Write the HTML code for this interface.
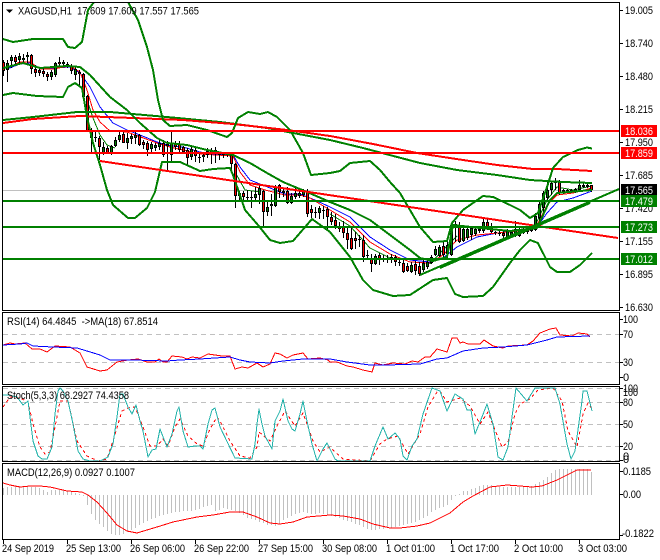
<!DOCTYPE html>
<html><head><meta charset="utf-8"><style>
html,body{margin:0;padding:0;background:#fff;width:660px;height:560px;overflow:hidden}
svg{display:block}
text{font-family:"Liberation Sans",sans-serif;font-size:11px;fill:#000}
.l{fill:none;stroke-linejoin:round;shape-rendering:crispEdges}
</style></head><body>
<svg width="660" height="560" viewBox="0 0 660 560" xmlns="http://www.w3.org/2000/svg">
<defs><clipPath id="m"><rect x="3" y="3" width="616" height="307"/></clipPath></defs>
<rect width="660" height="560" fill="#fff"/>

<g clip-path="url(#m)">
<path class="l" stroke="#c0c0c0" d="M3 190.5H619"/>
<!-- short MAs -->
<path class="l" stroke="#0000ff" d="M7 69L20 64 30 63 40 68 53 68 70 67 80 73 90 87 100 107 113 123 127 130 140 135 157 142 167 145 183 147 200 152 213 154 233 155 240 167 250 180 265 186 285 194 300 194 315 200 330 207 350 217 370 237 390 250 410 260 430 262 443 258 457 247 477 237 497 233 530 229 537 227 547 213 557 202 573 198 592 191"/>
<path class="l" stroke="#ff0000" d="M7 68L20 62 30 62 40 69 53 69 70 66 80 72 87 90 93 110 100 122 110 131 127 132 157 143 170 147 200 154 233 156 240 172 250 185 265 190 285 195 300 195 310 198 330 210 350 222 370 242 390 254 410 262 430 263 443 255 457 240 477 235 497 233 530 230 537 225 547 205 557 195 573 193 592 188"/>
<path class="l" stroke="#008000" d="M87 100L93 118 100 135 107 145 115 148M235 172L245 190 260 192M330 214L350 226 370 248 390 258M430 264L443 250 457 236M535 226L547 200 557 187 573 190 592 186"/>
<!-- wicks -->
<path class="l" stroke="#000" d="M3.5 60V76M7.5 60V82M11.5 55V68M15.5 55V65M19.5 53V65M23.5 54V64M27.5 52V63M31.5 54V74M35.5 65V77M39.5 68V76M43.5 68V77M47.5 72V81M51.5 70V80M55.5 62V77M59.5 57V67M63.5 60V66M67.5 62V68M71.5 64V74M75.5 67V80M79.5 70V85M83.5 73V98M87.5 95V132M91.5 128V152M95.5 132V142M99.5 136V160M103.5 142V155M107.5 146V154M111.5 145V155M115.5 137V147M119.5 132V142M123.5 131V143M127.5 133V149M131.5 134V144M135.5 132V144M139.5 134V146M143.5 140V149M147.5 141V156M151.5 142V152M155.5 143V151M159.5 140V150M163.5 140V157M167.5 141V170M171.5 131V161M175.5 141V150M179.5 141V152M183.5 146V153M187.5 148V165M191.5 146V160M195.5 148V162M199.5 154V163M203.5 152V162M207.5 148V158M211.5 148V164M215.5 147V163M219.5 152V160M223.5 152V158M227.5 152V157M231.5 153V172M235.5 163V208M239.5 191V201M243.5 191V201M247.5 190V202M251.5 191V208M255.5 187V202M259.5 185V204M263.5 190V226M267.5 202V216M271.5 194V216M275.5 185V207M279.5 184V198M283.5 188V197M287.5 187V204M291.5 193V204M295.5 187V199M299.5 191V198M303.5 189V197M307.5 189V217M311.5 205V218M315.5 207V218M319.5 206V219M323.5 206V219M327.5 207V229M331.5 212V225M335.5 214V229M339.5 222V232M343.5 221V238M347.5 226V249M351.5 227V250M355.5 232V249M359.5 235V247M363.5 235V262M367.5 250V260M371.5 254V272M375.5 254V265M379.5 253V265M383.5 255V262M387.5 255V263M391.5 254V263M395.5 255V266M399.5 259V266M403.5 260V273M407.5 263V272M411.5 262V273M415.5 261V275M419.5 262V276M423.5 260V272M427.5 259V269M431.5 255V264M435.5 246V256M439.5 245V257M443.5 242V258M447.5 238V258M451.5 223V256M455.5 221V242M459.5 222V243M463.5 228V242M467.5 227V240M471.5 226V240M475.5 228V236M479.5 227V233M483.5 219V233M487.5 219V230M491.5 223V233M495.5 231V235M499.5 231V236M503.5 231V238M507.5 229V239M511.5 230V237M515.5 221V237M519.5 226V237M523.5 228V234M527.5 226V234M531.5 224V232M535.5 213V231M539.5 202V225M543.5 191V216M547.5 180V200M551.5 181V195M555.5 178V190M559.5 180V195M563.5 189V194M567.5 189V193M571.5 189V193M575.5 188V193M579.5 180V192M583.5 183V188M587.5 183V188M591.5 185V192"/>
<!-- bodies outline -->
<path class="l" stroke="#000" stroke-width="3" d="M3.5 62V71M7.5 63V70M11.5 57V61M15.5 57V62M19.5 56V60M23.5 58V60M27.5 55V57M31.5 55V69M35.5 69V73M39.5 70V73M43.5 71V74M47.5 74V77M51.5 72V77M55.5 63V75M59.5 62V64M63.5 62V64M67.5 64V66M71.5 66V71M75.5 69V75M79.5 72V74M83.5 74V97M87.5 96V131M91.5 130V138M95.5 137V138M99.5 138V147M103.5 147V153M107.5 148V153M111.5 146V153M115.5 140V146M119.5 135V140M123.5 134V143M127.5 138V143M131.5 136V139M135.5 135V138M139.5 135V145M143.5 142V145M147.5 143V150M151.5 144V149M155.5 145V148M159.5 143V147M163.5 143V155M167.5 144V146M171.5 143V155M175.5 143V147M179.5 144V150M183.5 147V152M187.5 150V158M191.5 149V157M195.5 150V156M199.5 157V158M203.5 155V157M207.5 151V155M211.5 151V154M215.5 150V152M219.5 154V155M223.5 154V155M227.5 154V155M231.5 155V164M235.5 164V196M239.5 193V196M243.5 193V197M247.5 197V198M251.5 197V198M255.5 194V198M259.5 188V195M263.5 191V212M267.5 207V212M271.5 204V206M275.5 187V206M279.5 185V192M283.5 191V193M287.5 191V203M291.5 196V203M295.5 193V197M299.5 193V196M303.5 191V195M307.5 191V214M311.5 209V213M315.5 212V213M319.5 208V213M323.5 210V211M327.5 209V217M331.5 217V222M335.5 220V226M339.5 227V229M343.5 227V233M347.5 233V240M351.5 238V249M355.5 238V241M359.5 239V240M363.5 240V257M367.5 255V256M371.5 259V264M375.5 256V264M379.5 255V260M383.5 259V260M387.5 258V260M391.5 257V260M395.5 257V262M399.5 262V263M403.5 263V272M407.5 266V271M411.5 265V272M415.5 264V271M419.5 266V274M423.5 263V270M427.5 262V267M431.5 257V263M435.5 249V255M439.5 247V256M443.5 246V255M447.5 245V254M451.5 225V255M455.5 224V228M459.5 226V242M463.5 229V241M467.5 229V238M471.5 228V235M475.5 229V234M479.5 229V231M483.5 222V231M487.5 222V227M491.5 226V232M495.5 232V233M499.5 233V234M503.5 233V236M507.5 231V237M511.5 232V236M515.5 229V236M519.5 229V236M523.5 232V233M527.5 229V232M531.5 226V231M535.5 216V230M539.5 204V218M543.5 193V208M547.5 190V198M551.5 183V190M555.5 181V183M559.5 182V193M563.5 190V192M567.5 190V192M571.5 190V192M575.5 189V191M579.5 185V190M583.5 185V187M587.5 185V187M591.5 185V190"/>
<!-- red bodies -->
<path class="l" stroke="#ff0000" d="M3.5 63V70M15.5 58V61M31.5 56V68M35.5 70V72M39.5 71V72M43.5 72V73M47.5 75V76M59.5 63V63.5M67.5 65V65.5M71.5 67V70M79.5 73V73.5M83.5 75V96M87.5 97V130M91.5 131V137M99.5 139V146M107.5 149V152M123.5 135V142M139.5 136V144M143.5 143V144M147.5 144V149M163.5 144V154M175.5 144V146M179.5 145V149M183.5 148V151M187.5 151V157M195.5 151V155M215.5 151V151.5M231.5 156V163M235.5 165V195M243.5 194V196M263.5 192V211M279.5 186V191M287.5 192V202M307.5 192V213M311.5 210V212M327.5 210V216M331.5 218V221M335.5 221V225M339.5 228V228.5M343.5 228V232M347.5 234V239M351.5 239V248M355.5 239V240M363.5 241V256M371.5 260V263M379.5 256V259M395.5 258V261M403.5 264V271M407.5 267V270M415.5 265V270M419.5 267V273M443.5 247V254M455.5 225V227M459.5 227V241M487.5 223V226M491.5 227V231M503.5 234V235M559.5 183V192M591.5 186V189"/>
<!-- green bodies -->
<path class="l" stroke="#008000" d="M7.5 64V69M11.5 58V60M19.5 57V59M23.5 59V59.5M27.5 56V56.5M51.5 73V76M55.5 64V74M63.5 63V63.5M75.5 70V74M103.5 148V152M111.5 147V152M115.5 141V145M119.5 136V139M127.5 139V142M131.5 137V138M135.5 136V137M151.5 145V148M155.5 146V147M159.5 144V146M167.5 145V145.5M171.5 144V154M191.5 150V156M203.5 156V156.5M207.5 152V154M211.5 152V153M239.5 194V195M255.5 195V197M259.5 189V194M267.5 208V211M271.5 205V205.5M275.5 188V205M291.5 197V202M295.5 194V196M299.5 194V195M303.5 192V194M319.5 209V212M375.5 257V263M391.5 258V259M411.5 266V271M423.5 264V269M427.5 263V266M431.5 258V262M435.5 250V254M439.5 248V255M447.5 246V253M451.5 226V254M463.5 230V240M467.5 230V237M471.5 229V234M475.5 230V233M483.5 223V230M507.5 232V236M511.5 233V235M515.5 230V235M519.5 230V235M527.5 230V231M531.5 227V230M535.5 217V229M539.5 205V217M543.5 194V207M547.5 191V197M551.5 184V189M555.5 182V182.5M575.5 190V190.5M579.5 186V189"/>

<!-- long MAs -->
<path class="l" stroke="#008000" stroke-width="2" d="M3 120L33 117 77 112 110 112 167 117 220 122 267 128 330 140 363 148 420 163 457 170 497 175 530 180 563 182 592 183"/>
<path class="l" stroke="#ff0000" stroke-width="2" d="M3 123L33 119 80 116 133 118 183 120 233 124 287 130 330 136 373 144 417 153 463 160 497 165 533 169 557 169 592 171"/>
<!-- bands -->
<path class="l" stroke="#008000" stroke-width="2" d="M3 39L13 42 33 39 63 39 68 47 75 48 82 42 88 10 94 2 102 -30 120 -30 128 2 138 20 147 47 153 70 158 100 163 120 170 126 187 125 207 130 227 137 232 133 238 118 248 112 260 114 268 112 277 117 290 130 303 153 311 175 330 173 340 171 350 163 370 161 380 170 390 182 400 193 410 210 420 227 433 242 447 241 452 223 463 210 483 196 493 197 510 205 520 210 530 218 538 213 547 187 553 168 563 157 578 150 587 147.5 592 148.5"/>
<path class="l" stroke="#008000" stroke-width="2" d="M3 68L23 63 40 68 67 66 80 67 90 75 110 97 127 110 140 123 157 138 167 143 187 145 207 150 233 155 250 163 267 173 283 182 307 192 330 202 350 210 370 220 390 235 410 250 420 258 433 261 447 257 453 225 480 228 510 231 537 228 550 200 557 193 592 190"/>
<path class="l" stroke="#008000" stroke-width="2" d="M3 95L13 93 37 96 63 97 68 87 75 83 82 88 87 117 93 143 100 165 107 190 113 205 128 218 135 218 147 208 155 192 162 162 180 162 200 171 213 169 230 168 233 175 245 210 258 225 270 240 280 243 293 241 312 219 330 232 350 257 363 280 373 290 393 296 410 295 433 280 447 278 455 294 463 297 483 296 493 287 510 263 520 250 530 240 538 243 550 267 557 272 570 272 580 265 592 253"/>
<!-- trends and levels -->
<path class="l" stroke="#ff0000" stroke-width="2" d="M100 161L618 238"/>
<path class="l" stroke="#008000" stroke-width="2" d="M420 275L619 189"/>
<path class="l" stroke="#008000" stroke-width="2" d="M440 268L530 229M537 226L590 203"/>
<path class="l" stroke="#ff0000" stroke-width="2" d="M3 131H619M3 153H619"/>
<path class="l" stroke="#008000" stroke-width="2" d="M3 201H619M3 227H619M3 259H619"/>
</g>

<!-- RSI -->
<path class="l" stroke="#c0c0c0" stroke-dasharray="5 4" d="M3 334.5H619M3 362.5H619"/>
<path class="l" stroke="#ff0000" d="M3 345L10 343 15 344 25 343 32 349 40 349 47 352 55 346 70 347 80 353 87 367 100 371 107 370 117 362 128 360 138 359 147 362 155 362 159 359 163 362 167 362 172 356 182 357 187 359 192 357 200 358 208 354 222 356 230 356 235 369 242 367 248 368 257 363 263 367 270 364 275 353 280 354 287 358 293 355 303 353 308 359 320 358 328 360 330 362 337 362 347 366 353 367 363 370 372 372 375 363 383 365 393 363 405 364 412 361 418 362 425 357 430 357 437 349 447 352 452 338 457 338 460 343 463 342 468 344 480 344 484 340 493 346 503 348 508 346 527 345 533 341 540 333 550 329 556 328 560 335 572 336 578 333 587 334 590 337"/>
<path class="l" stroke="#0000ff" d="M3 345L20 344 27 343 33 346 53 347 77 348 87 351 100 355 110 360 133 360 167 361 180 360 200 359 230 357 240 360 250 362 270 363 283 361 303 359 330 359 347 362 370 365 387 365 420 364 437 359 447 358 463 351 483 348 503 347 527 345 547 340 557 337 590 336"/>

<!-- Stoch -->
<path class="l" stroke="#c0c0c0" stroke-dasharray="5 4" d="M3 388.5H619M3 402.5H619M3 424.5H619M3 446.5H619M3 460.5H619"/>
<path class="l" stroke="#ff0000" stroke-dasharray="3 3" d="M3 407L10 397 20 398 28 402 33 424 40 447 45 454 50 452 55 427 60 401 68 401 77 441 87 456 98 461 107 459 113 441 122 411 128 408 135 407 143 427 150 446 157 446 163 439 168 446 175 427 180 419 188 436 197 444 203 446 210 429 217 417 220 421 230 441 240 456 250 458 257 447 259 432 270 441 277 426 285 411 295 426 303 413 313 441 320 452 330 447 335 452 343 459 370 461 380 444 387 439 398 436 408 454 420 434 428 407 437 392 440 391 447 402 460 398 470 406 480 424 488 412 495 430 502 447 508 442 515 414 520 404 530 399 538 390 553 388 562 401 568 431 577 447 583 414 588 403 592 409"/>
<path class="l" stroke="#20b2aa" d="M3 395L8 395 17 397 23 405 28 401 30 417 33 441 38 456 42 459 47 459 52 447 55 414 58 391 60 388 63 391 68 401 73 424 78 451 83 459 90 461 100 461 108 457 113 444 117 417 120 394 123 394 128 407 132 414 136 405 140 421 143 431 148 457 152 450 156 449 160 429 167 447 172 434 177 411 179 407 183 431 188 447 195 446 200 446 203 449 208 424 212 410 215 408 220 427 235 458 252 459 255 444 257 424 259 409 262 424 265 436 272 449 275 421 280 411 283 399 288 421 292 429 295 431 300 414 303 401 307 421 312 444 317 461 323 449 327 443 335 459 338 461 370 461 375 446 383 427 388 439 395 433 400 439 403 456 407 460 412 446 417 439 423 414 432 388 440 391 447 411 455 394 463 399 467 410 471 410 475 434 482 417 487 404 493 424 498 457 503 460 508 447 512 417 516 388 527 401 535 388 555 388 560 404 567 444 571 459 575 451 582 401 583 391 587 391 592 411"/>

<!-- MACD hist -->
<path class="l" stroke="#c0c0c0" d="M3.5 495V488M7.5 495V487M11.5 495V487M15.5 495V486M19.5 495V486M23.5 495V486M27.5 495V486M31.5 495V487M35.5 495V487M39.5 495V488M43.5 495V490M47.5 495V492M51.5 495V490M55.5 495V490M59.5 495V490M63.5 495V490M67.5 495V491M71.5 495V492M75.5 495V493M79.5 495V494M83.5 495V496M87.5 495V505M91.5 495V514M95.5 495V520M99.5 495V524M103.5 495V527M107.5 495V531M111.5 495V534M115.5 495V535M119.5 495V535M123.5 495V534M127.5 495V532M131.5 495V530M135.5 495V528M139.5 495V525M143.5 495V523M147.5 495V521M151.5 495V519M155.5 495V518M159.5 495V516M163.5 495V515M167.5 495V514M171.5 495V513M175.5 495V512M179.5 495V512M183.5 495V511M187.5 495V511M191.5 495V511M195.5 495V510M199.5 495V509M203.5 495V507M207.5 495V506M211.5 495V505M215.5 495V511M219.5 495V510M223.5 495V508M227.5 495V509M231.5 495V510M235.5 495V511M239.5 495V513M243.5 495V515M247.5 495V518M251.5 495V519M255.5 495V520M259.5 495V522M263.5 495V523M267.5 495V525M271.5 495V525M275.5 495V526M279.5 495V524M283.5 495V520M287.5 495V518M291.5 495V516M295.5 495V514M299.5 495V513M303.5 495V512M307.5 495V513M311.5 495V514M315.5 495V514M319.5 495V513M323.5 495V514M327.5 495V515M331.5 495V516M335.5 495V517M339.5 495V518M343.5 495V520M347.5 495V521M351.5 495V522M355.5 495V524M359.5 495V525M363.5 495V527M367.5 495V529M371.5 495V530M375.5 495V530M379.5 495V529M383.5 495V529M387.5 495V528M391.5 495V528M395.5 495V527M399.5 495V526M403.5 495V525M407.5 495V524M411.5 495V523M415.5 495V522M419.5 495V520M423.5 495V518M427.5 495V516M431.5 495V512M435.5 495V510M439.5 495V508M443.5 495V507M447.5 495V505M451.5 495V500M455.5 495V496M459.5 495V494M463.5 495V491M467.5 495V491M471.5 495V489M475.5 495V488M479.5 495V486M483.5 495V485M487.5 495V485M491.5 495V485M495.5 495V486M499.5 495V487M503.5 495V487M507.5 495V487M511.5 495V487M515.5 495V487M519.5 495V487M523.5 495V487M527.5 495V487M531.5 495V486M535.5 495V484M539.5 495V482M543.5 495V480M547.5 495V477M551.5 495V473M555.5 495V470M559.5 495V469M563.5 495V469M567.5 495V469M571.5 495V469M575.5 495V469M579.5 495V469M583.5 495V469M587.5 495V469M591.5 495V472"/>
<path class="l" stroke="#ff0000" d="M3 483L10 485 20 487 30 486 40 486 50 487 67 491 82 492 88 495 97 502 107 513 117 525 127 531 137 533 147 530 157 527 173 522 197 517 213 515 230 512 243 512 257 517 270 523 280 524 293 522 307 517 330 515 343 516 360 519 373 524 390 528 400 528 417 526 430 523 450 513 463 502 473 496 490 487 507 485 520 486 532 487 542 486 557 480 577 470 591 470"/>

<!-- frames -->
<path class="l" stroke="#000" stroke-width="1.4" d="M2.5 2.5H619.5V310.5H2.5ZM2.5 312.5H619.5V384.5H2.5ZM2.5 386.5H619.5V461.5H2.5ZM2.5 463.5H619.5V539.5H2.5Z"/>
<!-- ticks -->
<path class="l" stroke="#000" d="M620 10.5h3M620 43.5h3M620 76.5h3M620 109.5h3M620 142.5h3M620 175.5h3M620 208.5h3M620 241.5h3M620 274.5h3M620 307.5h3M620 319.5h3M620 334.5h3M620 362.5h3M620 377.5h3M620 388.5h3M620 402.5h3M620 424.5h3M620 446.5h3M620 460.5h3M620 471.5h3M620 494.5h3M620 535.5h3M3.5 540v4M67.5 540v4M131.5 540v4M195.5 540v4M259.5 540v4M323.5 540v4M387.5 540v4M451.5 540v4M515.5 540v4M579.5 540v4"/>

<!-- label boxes -->
<rect x="621" y="125" width="36" height="12" fill="#ff0000"/>
<rect x="621" y="147" width="36" height="12" fill="#ff0000"/>
<rect x="621" y="184" width="36" height="12" fill="#000"/>
<rect x="621" y="221" width="36" height="12" fill="#008000"/>
<rect x="621" y="253" width="36" height="12" fill="#008000"/>

<!-- triangle + headers -->
<path d="M6 9.5h7l-3.5 3.5z" fill="#000"/>
<text x="18" y="14.5" textLength="181" lengthAdjust="spacingAndGlyphs" xml:space="preserve">XAGUSD,H1  17.609 17.609 17.557 17.565</text>
<text x="7" y="325" textLength="151" lengthAdjust="spacingAndGlyphs" xml:space="preserve">RSI(14) 64.4845  -&gt;MA(18) 67.8514</text>
<text x="7" y="399" textLength="122" lengthAdjust="spacingAndGlyphs">Stoch(5,3,3) 68.2927 74.4358</text>
<text x="7" y="476" textLength="128" lengthAdjust="spacingAndGlyphs">MACD(12,26,9) 0.0927 0.1007</text>

<!-- price axis -->
<g>
<text x="625" y="14" textLength="28" lengthAdjust="spacingAndGlyphs">19.005</text>
<text x="625" y="47" textLength="28" lengthAdjust="spacingAndGlyphs">18.740</text>
<text x="625" y="80" textLength="28" lengthAdjust="spacingAndGlyphs">18.480</text>
<text x="625" y="113" textLength="28" lengthAdjust="spacingAndGlyphs">18.215</text>
<text x="625" y="135" textLength="28" lengthAdjust="spacingAndGlyphs" style="fill:#fff">18.036</text>
<text x="625" y="146" textLength="28" lengthAdjust="spacingAndGlyphs">17.950</text>
<text x="625" y="157" textLength="28" lengthAdjust="spacingAndGlyphs" style="fill:#fff">17.859</text>
<text x="625" y="179" textLength="28" lengthAdjust="spacingAndGlyphs">17.685</text>
<text x="625" y="212" textLength="28" lengthAdjust="spacingAndGlyphs">17.420</text>
<text x="625" y="194" textLength="28" lengthAdjust="spacingAndGlyphs" style="fill:#fff">17.565</text>
<rect x="621" y="195" width="36" height="12" fill="#008000"/>
<text x="625" y="205" textLength="28" lengthAdjust="spacingAndGlyphs" style="fill:#fff">17.479</text>
<text x="625" y="231" textLength="28" lengthAdjust="spacingAndGlyphs" style="fill:#fff">17.273</text>
<text x="625" y="245" textLength="28" lengthAdjust="spacingAndGlyphs">17.155</text>
<text x="625" y="263" textLength="28" lengthAdjust="spacingAndGlyphs" style="fill:#fff">17.012</text>
<text x="625" y="278" textLength="28" lengthAdjust="spacingAndGlyphs">16.895</text>
<text x="625" y="311" textLength="28" lengthAdjust="spacingAndGlyphs">16.630</text>
<text x="623" y="323" textLength="15" lengthAdjust="spacingAndGlyphs">100</text>
<text x="623" y="338" textLength="10" lengthAdjust="spacingAndGlyphs">70</text>
<text x="623" y="366" textLength="10" lengthAdjust="spacingAndGlyphs">30</text>
<text x="623" y="381">0</text>
<text x="623" y="396" textLength="15" lengthAdjust="spacingAndGlyphs">100</text>
<text x="623" y="392" textLength="15" lengthAdjust="spacingAndGlyphs">100</text>
<text x="623" y="406" textLength="10" lengthAdjust="spacingAndGlyphs">80</text>
<text x="623" y="428" textLength="10" lengthAdjust="spacingAndGlyphs">50</text>
<text x="623" y="450" textLength="10" lengthAdjust="spacingAndGlyphs">20</text>
<text x="623" y="460">0</text>
<text x="623" y="463">0</text>
<text x="623" y="475" textLength="28" lengthAdjust="spacingAndGlyphs">0.1185</text>
<text x="623" y="498" textLength="18" lengthAdjust="spacingAndGlyphs">0.00</text>
<text x="622" y="537" textLength="32" lengthAdjust="spacingAndGlyphs">-0.1822</text>
</g>

<!-- time axis -->
<g>
<text x="2" y="552" textLength="52" lengthAdjust="spacingAndGlyphs">24 Sep 2019</text>
<text x="66" y="552" textLength="55" lengthAdjust="spacingAndGlyphs">25 Sep 13:00</text>
<text x="130" y="552" textLength="55" lengthAdjust="spacingAndGlyphs">26 Sep 06:00</text>
<text x="194" y="552" textLength="55" lengthAdjust="spacingAndGlyphs">26 Sep 22:00</text>
<text x="258" y="552" textLength="55" lengthAdjust="spacingAndGlyphs">27 Sep 15:00</text>
<text x="322" y="552" textLength="55" lengthAdjust="spacingAndGlyphs">30 Sep 08:00</text>
<text x="386" y="552" textLength="49" lengthAdjust="spacingAndGlyphs">1 Oct 01:00</text>
<text x="450" y="552" textLength="49" lengthAdjust="spacingAndGlyphs">1 Oct 17:00</text>
<text x="514" y="552" textLength="49" lengthAdjust="spacingAndGlyphs">2 Oct 10:00</text>
<text x="578" y="552" textLength="49" lengthAdjust="spacingAndGlyphs">3 Oct 03:00</text>
</g>
</svg>
</body></html>
